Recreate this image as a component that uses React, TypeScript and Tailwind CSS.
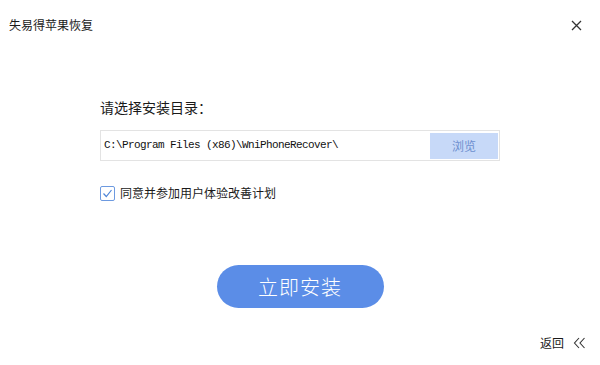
export default function App() {
  return (
    <div className="relative flex h-[365px] w-[600px] flex-col bg-white font-['Noto_Sans_CJK_SC','Noto_Sans',sans-serif] text-[#1a1a1a]">
      {/* Header */}
      <div className="flex items-center justify-between pl-[9px] pr-[18px] pt-[17px]">
        <span className="text-[12px] leading-[16px]">失易得苹果恢复</span>
        <svg width="11" height="11" viewBox="0 0 11 11" className="text-[#333]">
          <path d="M1 1L10 10M10 1L1 10" stroke="currentColor" strokeWidth="1.3" />
        </svg>
      </div>

      {/* Content */}
      <div className="mt-[64px] flex flex-col pl-[100px]">
        <span className="text-[14px] leading-[20px]">请选择安装目录：</span>

        <div className="mt-[13px] flex h-[31px] w-[400px] items-center border border-[#e3e3e3] pl-[3px] pr-[1px]">
          <span className="font-['Liberation_Mono',monospace] text-[11px] tracking-[-0.6px] text-[#111]">
            C:\Program Files (x86)\WniPhoneRecover\
          </span>
          <button className="ml-auto flex h-[26px] w-[68px] items-center justify-center bg-[#c7d9f8] text-[12px] text-[#6d8fcf]">
            浏览
          </button>
        </div>

        <div className="mt-[24px] flex items-center gap-[5px]">
          <div className="flex h-[15px] w-[15px] items-center justify-center rounded-[2px] border border-[#6d9ae0]">
            <svg width="11" height="11" viewBox="0 0 11 11">
              <path d="M1.5 5.5L4.3 8.5L9.5 2" fill="none" stroke="#4f86d8" strokeWidth="1.2" />
            </svg>
          </div>
          <span className="text-[12px] leading-[16px]">同意并参加用户体验改善计划</span>
        </div>
      </div>

      <div className="mt-[64px] flex justify-center">
        <button className="h-[43px] w-[167px] rounded-full bg-[#5b8de7] text-[20px] font-light tracking-[1px] text-white">
          立即安装
        </button>
      </div>

      {/* Footer */}
      <div className="mt-auto flex items-center justify-end gap-[9px] pb-[14px] pr-[14px]">
        <span className="text-[12px] leading-[16px]">返回</span>
        <svg width="13" height="12" viewBox="0 0 13 12" className="text-[#333]">
          <path d="M6 1L1.5 6L6 11M11.5 1L7 6L11.5 11" fill="none" stroke="currentColor" strokeWidth="1.1" />
        </svg>
      </div>
    </div>
  )
}
